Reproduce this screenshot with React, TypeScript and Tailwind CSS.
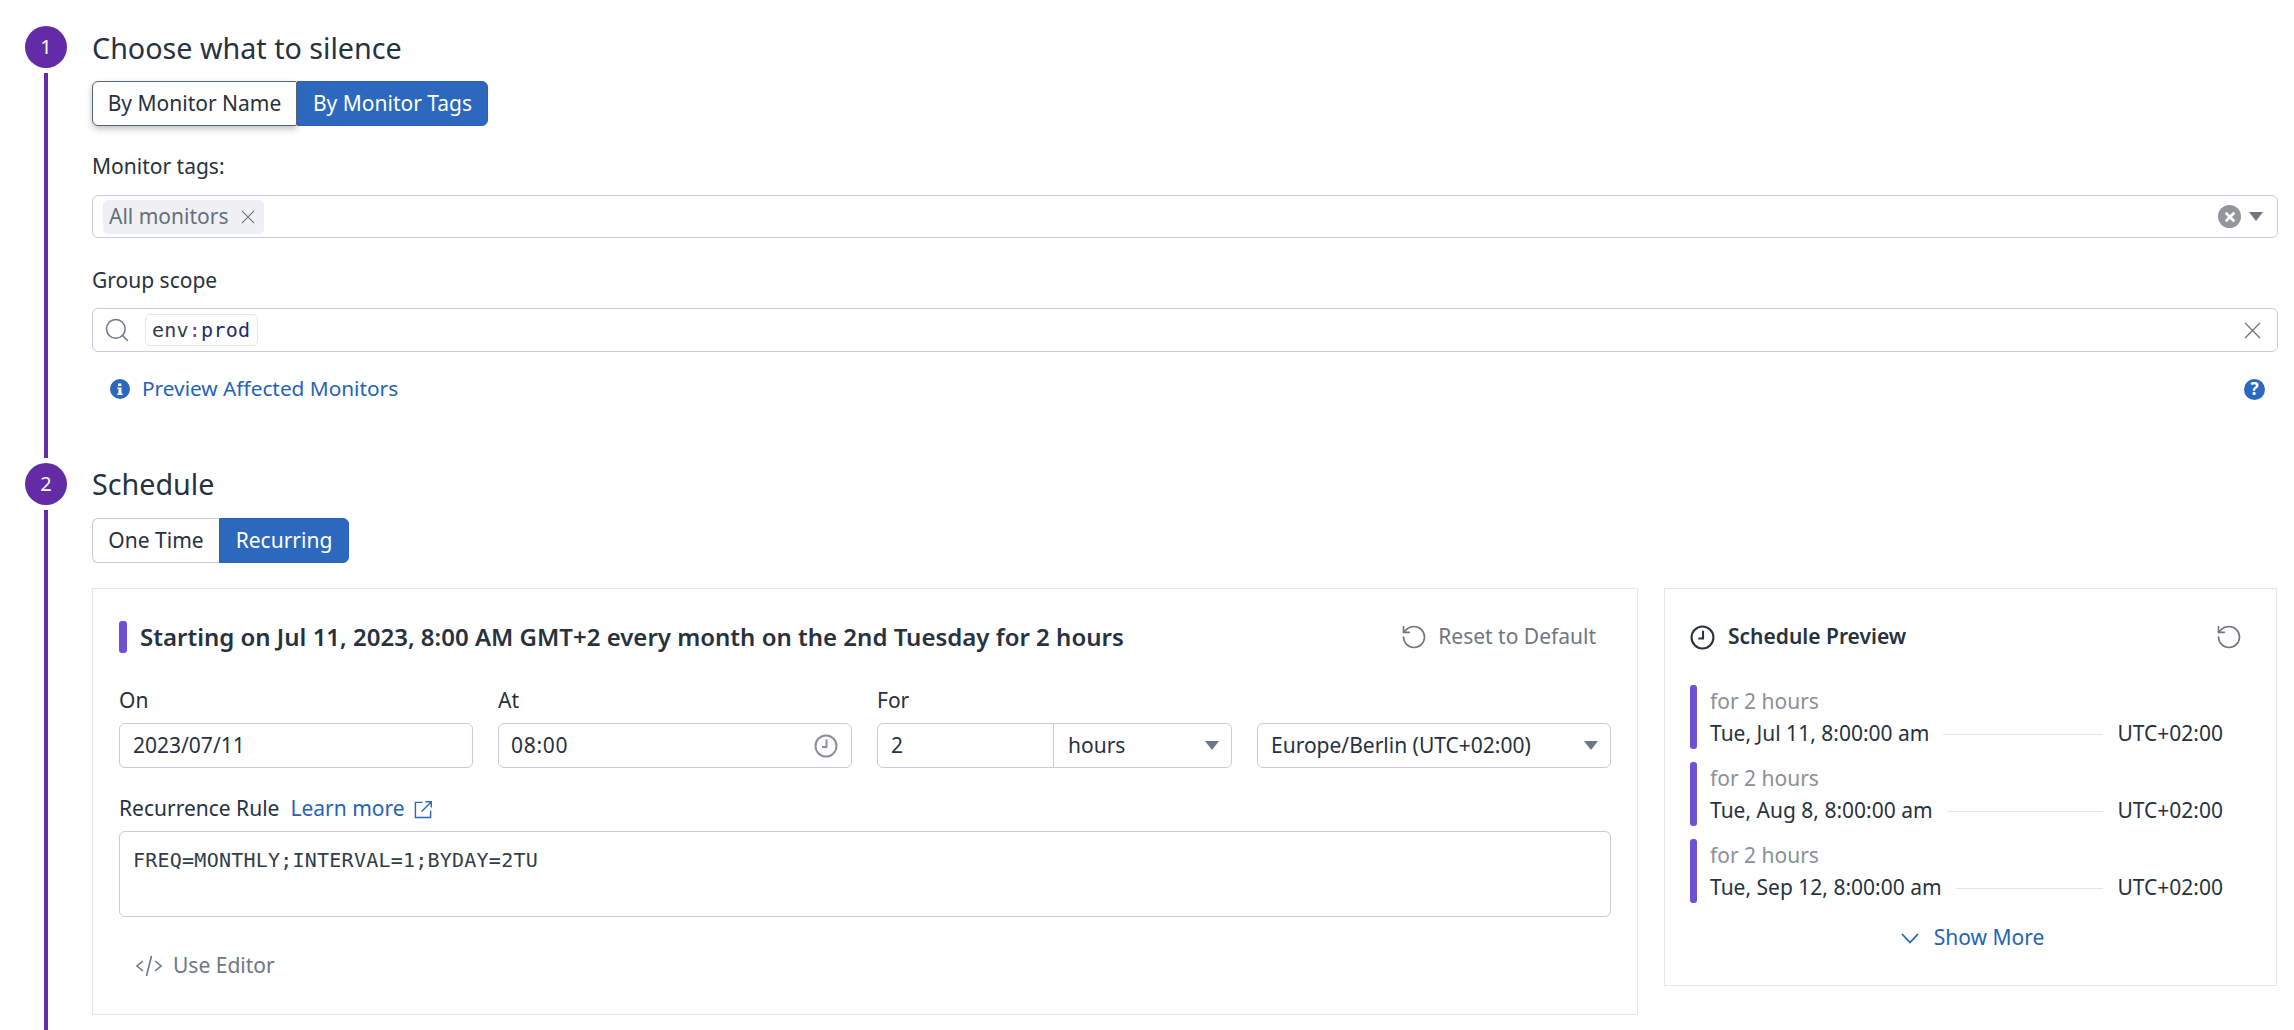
import { RotateCcw, Search } from "lucide-react";
import type { ReactNode } from "react";

const previewRows = ["Tue, Jul 11, 8:00:00 am", "Tue, Aug 8, 8:00:00 am", "Tue, Sep 12, 8:00:00 am"];

const Caret = () => (
    <svg viewBox="0 0 14 9" className="w-[14px] h-[9px] shrink-0 fill-[#6f7782]">
        <path d="M0 0h14L7 9z" />
    </svg>
);

const Cross = ({ className, width = 1.2 }: { className: string; width?: number }) => (
    <svg viewBox="0 0 16 16" fill="none" stroke="currentColor" strokeWidth={width} className={className}>
        <path d="M1 1l14 14M15 1L1 15" />
    </svg>
);

const ClockIcon = ({ className }: { className: string }) => (
    <svg viewBox="0 0 24 24" fill="none" stroke="currentColor" strokeWidth="2" className={className}>
        <circle cx="12" cy="12" r="10.5" />
        <path d="M12.5 5.5v7.5H8" />
    </svg>
);

const StepRail = ({ n }: { n: number }) => (
    <div className="w-[42px] shrink-0 flex flex-col items-center gap-[5px]">
        <div className="w-[42px] h-[42px] rounded-full bg-[#632ca6] text-white text-[20px] flex items-center justify-center">{n}</div>
        <div className="w-1 flex-1 bg-[#632ca6]" />
    </div>
);

const Field = ({ label, children }: { label: string; children: ReactNode }) => (
    <div>
        <div className="h-7 leading-7 text-[21px] text-[#28323e]">{label}</div>
        <div className="mt-[9px]">{children}</div>
    </div>
);

const Segmented = ({ left, right, focused, leftW, rightW }: { left: string; right: string; focused?: boolean; leftW: string; rightW: string }) => (
    <div className="flex h-[45px] text-[21px]">
        <div className={`${leftW} flex items-center justify-center bg-white rounded-l-[6px] border text-[#28323e] ${focused ? "border-[#5b6270] shadow-[0_3px_6px_rgba(40,50,62,0.3)] rounded-r-[2px]" : "border-[#c7cbe0] border-r-0"}`}>
            {left}
        </div>
        <div className={`${rightW} flex items-center justify-center bg-[#2d68bf] text-white rounded-r-[6px] border border-[#2a62b4]`}>{right}</div>
    </div>
);

export default function App() {
    return (
        <div className="h-[1030px] overflow-hidden bg-white pt-[26px] pl-[25px] pr-4 flex flex-col font-['Noto_Sans',sans-serif] text-[#28323e]">
            {/* step 1 */}
            <section className="flex gap-[25px] h-[437px] pb-[5px]">
                <StepRail n={1} />
                <div className="flex-1 min-w-0">
                    <h2 className="h-[44px] flex items-center text-[28.7px] font-normal">Choose what to silence</h2>
                    <div className="mt-[11px]">
                        <Segmented left="By Monitor Name" right="By Monitor Tags" focused leftW="w-[205px]" rightW="w-[191px]" />
                    </div>
                    <div className="mt-[26px] h-7 leading-7 text-[21px]">Monitor tags:</div>
                    <div className="mt-[15px] h-[43px] border border-[#c7cbe0] rounded-[6px] flex items-center pl-[10px] pr-[14px]">
                        <div className="h-[34px] w-[161px] bg-[#eff0f4] rounded-[5px] flex items-center pl-[6px] text-[21px] text-[#666f7b]">
                            All monitors
                            <Cross className="w-[14px] h-[14px] ml-[13px] text-[#666f7b]" />
                        </div>
                        <div className="flex-1" />
                        <div className="w-[23px] h-[23px] rounded-full bg-[#92969b] flex items-center justify-center">
                            <Cross className="w-[10px] h-[10px] text-white" width={4.5} />
                        </div>
                        <div className="ml-2"><Caret /></div>
                    </div>
                    <div className="mt-[28px] h-7 leading-7 text-[21px]">Group scope</div>
                    <div className="mt-[14px] h-[44px] border border-[#c7cbe0] rounded-[6px] flex items-center pl-[10px] pr-[14px]">
                        <Search className="w-[28px] h-[28px] text-[#6f7782]" strokeWidth={1.3} />
                        <div className="ml-[14px] h-[32px] w-[113px] border border-[#e4e6ed] rounded-[5px] flex items-center pl-[6px] text-[20px] font-['DejaVu_Sans_Mono',monospace] tracking-[0.23px] text-[#333d49]">
                            <span>env</span>
                            <span className="text-[#a1338f]">:</span>
                            <span className="text-[#1c2b74]">prod</span>
                        </div>
                        <div className="flex-1" />
                        <Cross className="w-[17px] h-[17px] text-[#6f7782] mr-[2px]" />
                    </div>
                    <div className="mt-[23px] h-7 flex items-center pl-[18px] pr-[13px] text-[20.8px] text-[#2463b8]">
                        <svg viewBox="0 0 20 20" className="w-5 h-5">
                            <circle cx="10" cy="10" r="10" fill="#2d68bf" />
                            <path d="M8 4.5h3.4v2.6H8zM7.5 8.5h4v6h1.200v1.500H7.300v-1.500h1.200v-4.500H7.500z" fill="#fff" />
                        </svg>
                        <span className="ml-[12px]">Preview Affected Monitors</span>
                        <div className="flex-1" />
                        <div className="w-[21px] h-[21px] rounded-full bg-[#2d68bf] text-white text-[17px] font-bold flex items-center justify-center">?</div>
                    </div>
                </div>
            </section>

            {/* step 2 */}
            <section className="flex gap-[25px] flex-1 min-h-0">
                <StepRail n={2} />
                <div className="flex-1 min-w-0">
                    <h2 className="h-[42px] flex items-center text-[28.7px] font-normal">Schedule</h2>
                    <div className="mt-[13px]">
                        <Segmented left="One Time" right="Recurring" leftW="w-[127px]" rightW="w-[130px]" />
                    </div>
                    <div className="mt-[25px] flex items-start gap-[26px]">
                        <div className="w-[1546px] shrink-0 border border-[#e4e6ed] pt-[32px] pb-[34px] px-[26px]">
                            <div className="h-[32px] flex items-center">
                                <div className="w-2 h-[32px] rounded-[3px] bg-[#6e4fd6]" />
                                <div className="ml-[13px] text-[24px] font-semibold">Starting on Jul 11, 2023, 8:00 AM GMT+2 every month on the 2nd Tuesday for 2 hours</div>
                                <div className="flex-1" />
                                <div className="flex items-center text-[21px] text-[#6f7782] pr-[15px]">
                                    <RotateCcw className="w-[28px] h-[28px]" strokeWidth={1.4} />
                                    <span className="ml-[10px]">Reset to Default</span>
                                </div>
                            </div>
                            <div className="mt-[33px] grid grid-cols-[354px_354px_355px_1fr] gap-[25px]">
                                <Field label="On">
                                    <div className="h-[45px] border border-[#c7cbe0] rounded-[6px] flex items-center pl-[13px] text-[21px]">2023/07/11</div>
                                </Field>
                                <Field label="At">
                                    <div className="h-[45px] border border-[#c7cbe0] rounded-[6px] flex items-center justify-between pl-[12px] pr-[13px] text-[21px]">
                                        <span className="tracking-[0.7px]">08:00</span>
                                        <ClockIcon className="w-[24px] h-[24px] text-[#8b9097]" />
                                    </div>
                                </Field>
                                <Field label="For">
                                    <div className="h-[45px] border border-[#c7cbe0] rounded-[6px] flex items-center text-[21px]">
                                        <div className="w-[176px] h-full flex items-center pl-[13px] border-r border-[#c7cbe0]">2</div>
                                        <div className="flex-1 flex items-center justify-between pl-[14px] pr-[12px]">
                                            hours
                                            <Caret />
                                        </div>
                                    </div>
                                </Field>
                                <Field label=" ">
                                    <div className="h-[45px] border border-[#c7cbe0] rounded-[6px] flex items-center justify-between pl-[13px] pr-[12px] text-[21px]">
                                        Europe/Berlin (UTC+02:00)
                                        <Caret />
                                    </div>
                                </Field>
                            </div>
                            <div className="mt-[27px] h-7 flex items-center text-[21px]">
                                Recurrence Rule
                                <span className="ml-[11px] text-[#2463b8]">Learn more</span>
                                <svg viewBox="0 0 20 20" fill="none" stroke="#2d68bf" strokeWidth="1.5" className="ml-[9px] w-[19px] h-[19px]">
                                    <path d="M9 2.500H1.500v16h16V11M8 12L18 2M12 1.800h6.200V8" />
                                </svg>
                            </div>
                            <div className="mt-[8px] h-[86px] border border-[#c7cbe0] rounded-[6px] pl-[13px] pt-[13px] text-[20px] font-['DejaVu_Sans_Mono',monospace] tracking-[0.23px] text-[#333d49]">
                                FREQ=MONTHLY;INTERVAL=1;BYDAY=2TU
                            </div>
                            <div className="mt-[35px] h-7 flex items-center pl-[17px] text-[21px] text-[#6f7782]">
                                <svg viewBox="0 0 26 22" fill="none" stroke="currentColor" strokeWidth="1.6" className="w-[26px] h-[22px]">
                                    <path d="M7 6l-6 5 6 5M19 6l6 5-6 5M15.500 1L10.500 21" />
                                </svg>
                                <span className="ml-[11px]">Use Editor</span>
                            </div>
                        </div>

                        <div className="w-[613px] shrink-0 border border-[#e4e6ed] pt-[32px] pb-[33px] pl-[25px] pr-[37px]">
                            <div className="h-[32px] flex items-center justify-between">
                                <div className="flex items-center">
                                    <ClockIcon className="w-[25px] h-[25px]" />
                                    <span className="ml-[13px] text-[21px] font-semibold">Schedule Preview</span>
                                </div>
                                <RotateCcw className="w-[28px] h-[28px] -mr-[4px] text-[#6f7782]" strokeWidth={1.4} />
                            </div>
                            <div className="mt-[32px] flex flex-col gap-[13px]">
                                {previewRows.map((row) => (
                                    <div key={row} className="flex h-[64px]">
                                        <div className="w-[7px] rounded-[3px] bg-[#6e4fd6]" />
                                        <div className="ml-[13px] mr-[16px] flex-1 min-w-0 text-[21px]">
                                            <div className="h-[34px] flex items-center text-[#8b9097]">for 2 hours</div>
                                            <div className="h-[30px] flex items-center">
                                                <span>{row}</span>
                                                <div className="mx-[14px] flex-1 h-px bg-[#e2e5ed]" />
                                                <span>UTC+02:00</span>
                                            </div>
                                        </div>
                                    </div>
                                ))}
                            </div>
                            <div className="mt-[21px] ml-[16px] h-7 flex items-center justify-center text-[21px] text-[#2463b8]">
                                <svg viewBox="0 0 18 11" fill="none" stroke="currentColor" strokeWidth="1.8" className="w-[18px] h-[11px]">
                                    <path d="M1 1l8 8.500L17 1" />
                                </svg>
                                <span className="ml-[15px]">Show More</span>
                            </div>
                        </div>
                    </div>
                </div>
            </section>
        </div>
    );
}
